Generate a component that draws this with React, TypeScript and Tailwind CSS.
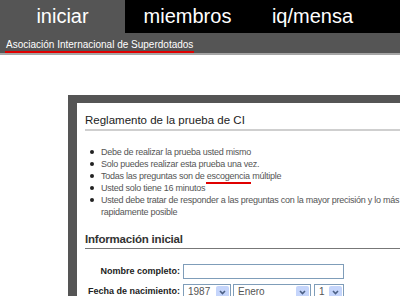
export default function App() {
  const rules = [
    "Debe de realizar la prueba usted mismo",
    "Solo puedes realizar esta prueba una vez.",
    null,
    "Usted solo tiene 16 minutos",
    "Usted debe tratar de responder a las preguntas con la mayor precisión y lo más rapidamente posible",
  ];

  return (
    <div className="relative h-[296px] w-[400px] overflow-hidden bg-white font-['Liberation_Sans',sans-serif]">
      {/* Top nav */}
      <div className="flex h-[33px] bg-black text-[20px] leading-[32px] text-white">
        <div className="w-[125px] shrink-0 bg-[#555] text-center">iniciar</div>
        <div className="w-[125px] shrink-0 text-center">miembros</div>
        <div className="w-[125px] shrink-0 text-center">iq/mensa</div>
      </div>

      {/* Sub bar */}
      <div className="h-[22px] border-b-2 border-[#a5a5a5] bg-[#555] px-[6px] pt-[6px] text-[10px] leading-[12px]">
        <span className="relative inline-block align-top text-white">
          Asociación Internacional de Superdotados
          <span className="absolute -left-[1px] -right-[1px] top-[12px] h-[2px] bg-[#e00000]" />
        </span>
      </div>

      {/* Framed content */}
      <div className="ml-[68px] mt-[40px] w-[400px] border-l-[9px] border-t-[8px] border-[#555] bg-white pl-[8px] pt-[10px]">
        <h2 className="border-b-2 border-[#cfcfcf] pb-[2px] text-[11.5px] leading-[14px] text-[#222]">
          Reglamento de la prueba de CI
        </h2>

        <ul className="mt-[15px] pl-[5px] text-[9px] leading-[12px] tracking-[-0.25px] text-[#555]">
          {rules.map((r, i) => (
            <li key={i} className="flex">
              <span className="mr-[7px] mt-[4px] inline-block h-[4px] w-[4px] shrink-0 rounded-full bg-[#222]" />
              <span className="w-[318px]">
                {r ?? (
                  <>
                    Todas las preguntas son de{" "}
                    <span className="relative">
                      escogencia
                      <span className="absolute -left-[1px] -right-[1px] top-[11px] h-[2px] bg-[#e00000]" />
                    </span>{" "}
                    múltiple
                  </>
                )}
              </span>
            </li>
          ))}
        </ul>

        <h2 className="mt-[14px] border-b border-[#777] pb-[2px] text-[11.5px] font-bold leading-[14px] tracking-[-0.2px] text-[#333]">
          Información inicial
        </h2>

        <div className="mt-[15px] flex flex-col gap-[5px] text-[9px] text-[#222]">
          <div className="flex items-center">
            <label className="w-[98px] whitespace-nowrap pr-[3px] text-right font-bold">Nombre completo:</label>
            <div className="h-[15px] w-[161px] border border-[#7f9db9] bg-white" />
          </div>
          <div className="flex items-center">
            <label className="w-[98px] whitespace-nowrap pr-[3px] text-right font-bold">Fecha de nacimiento:</label>
            <div className="flex">
              <Select w="w-[48px]" label="1987" />
              <Select w="w-[78px] ml-[2px]" label="Enero" />
              <Select w="w-[30px] ml-[3px]" label="1" />
            </div>
          </div>
        </div>
      </div>
    </div>
  );
}

function Select({ w, label }: { w: string; label: string }) {
  return (
    <div className={`flex h-[16px] ${w} items-center justify-between border border-[#7f9db9] bg-white pl-[4px] pr-[1px] text-[10px] text-[#555]`}>
      <span className="leading-[14px]">{label}</span>
      <span className="flex h-[12px] w-[13px] items-center justify-center rounded-[2px] bg-[#c5d5fb]">
        <svg width="7" height="5" viewBox="0 0 7 5">
          <path d="M1 1 L3.5 3.5 L6 1" stroke="#4d6185" strokeWidth="1.6" fill="none" />
        </svg>
      </span>
    </div>
  );
}
